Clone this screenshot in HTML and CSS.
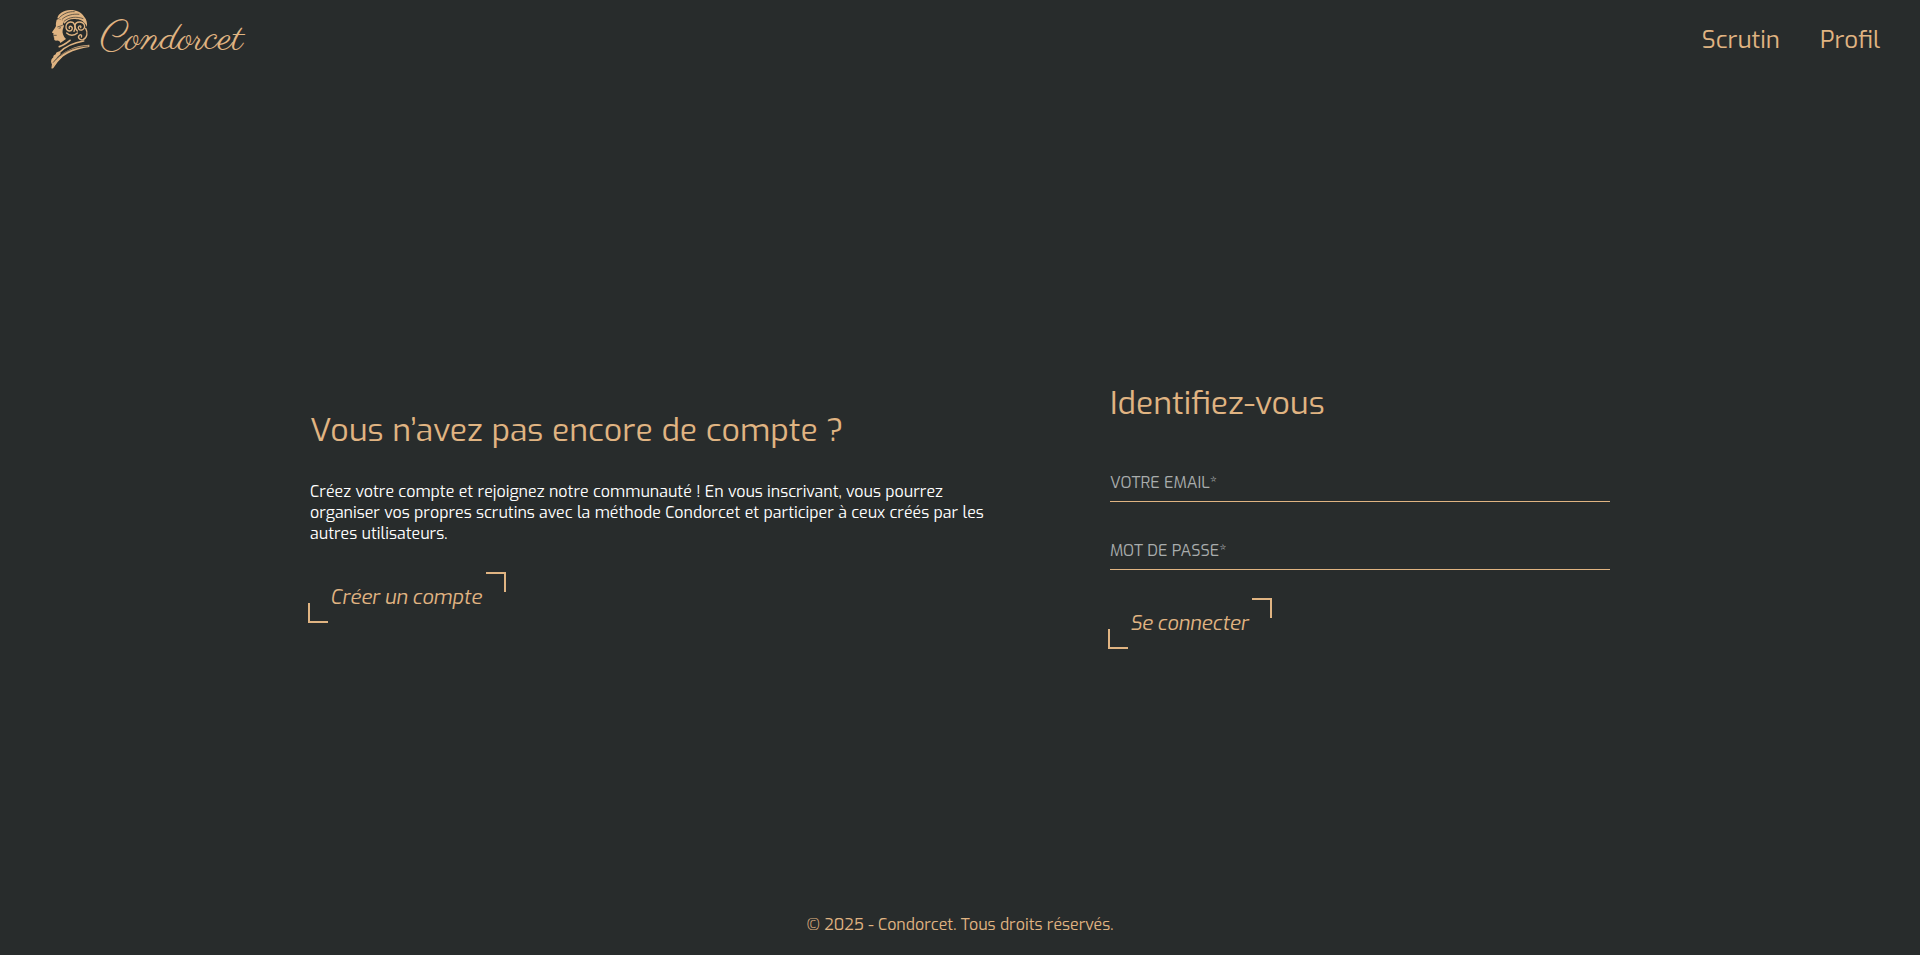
FILE: index.html
```html
<!DOCTYPE html>
<html lang="fr">
<head>
<meta charset="utf-8">
<meta name="viewport" content="width=device-width, initial-scale=1">
<title>Condorcet - Connexion</title>
<link rel="stylesheet" href="styles.css">
</head>
<body>
<header class="header">
  <a class="logo" href="#" aria-label="Condorcet">
    <svg class="logo-bust" viewBox="0 3 150 204" aria-hidden="true">
      <g class="bust-fill">
        <path d="M38 44 C36 52 35 58 36 63 C32 71 27 77 24 82 C24 85 28 84 29 86 C27 89 28 91 30 92 C28 95 29 97 31 98 C29 103 32 107 37 107 C43 106 47 108 49 114 L66 102 C58 94 54 84 56 75 L60 62 L56 58 L60 50 L52 44 L44 42Z"/>
        <path d="M40 40 C42 26 60 15 78 15 C94 14 114 22 121 36 C128 44 130 54 129 66 C122 50 110 43 98 43 C82 40 68 46 61 57 C62 50 50 42 40 40Z"/>
        <path d="M22 165 C24 158 29 160 28 154 C30 148 36 151 36 145 C40 138 45 142 47 138 L50 147 C38 157 30 168 25 179 C22 176 20 170 22 165Z"/>
        <path d="M136 119 C96 120 52 138 24 176 L22 192 C45 152 90 132 136 126Z"/>
      </g>
      <g class="bust-line">
        <path d="M100 78 C89 67 91 51 106 51 C123 51 127 69 114 75 C105 77 100 69 105 64 C109 61 112 64 110 68"/>
        <path d="M90 79 C97 66 92 50 79 51 C63 53 62 74 75 78 C85 79 88 68 81 64 C77 63 74 66 76 70"/>
        <path d="M125 70 C132 82 130 99 117 104 C106 107 99 96 107 90 C111 88 115 92 112 96"/>
        <path d="M68 84 C76 93 91 93 100 84"/>
      </g>
      <g class="bust-band">
        <path d="M46 125 C60 121 68 114 78 106 M48 141 C67 122 90 113 119 108"/>
        <path d="M53 155 C43 164 34 175 26 188"/>
      </g>
      <path class="bust-cut" d="M46 38 C58 26 74 19 92 20 M54 43 C68 30 88 26 106 28 M60 49 C76 35 98 34 118 41 M40 66 L56 61 M44 70 L51 68 M30 91 L38 91 M27 173 C52 143 86 126 133 123"/>
    </svg>
    <span class="logo-name">Condorcet</span>
  </a>
  <nav class="nav">
    <a href="#">Scrutin</a>
    <a href="#">Profil</a>
  </nav>
</header>
<main class="main">
  <div class="columns">
    <section class="signup">
      <h2 class="title">Vous n’avez pas encore de compte ?</h2>
      <p class="intro">Créez votre compte et rejoignez notre communauté ! En vous inscrivant, vous pourrez organiser vos propres scrutins avec la méthode Condorcet et participer à ceux créés par les autres utilisateurs.</p>
      <a class="action" href="#">Créer un compte</a>
    </section>
    <section class="login">
      <h2 class="title title-form">Identifiez-vous</h2>
      <form class="form">
        <input class="field" type="email" aria-label="Votre email" placeholder="VOTRE EMAIL*" required>
        <input class="field" type="password" aria-label="Mot de passe" placeholder="MOT DE PASSE*" required>
        <button class="action" type="submit">Se connecter</button>
      </form>
    </section>
  </div>
</main>
<footer class="footer">© 2025 - Condorcet. Tous droits réservés.</footer>
</body>
</html>
```
FILE: styles.css
```css
:root {
  --bg: #282c2c;
  --gold: #e0b482;
  --light: #ffffff;
  --muted: #a9adad;
  --sans: Exo, "Exo 2", Roboto, sans-serif;
}

*, *::before, *::after { box-sizing: border-box; }

body {
  margin: 0;
  min-height: 100vh;
  display: flex;
  flex-direction: column;
  background: var(--bg);
  color: var(--gold);
  font: 16px/21px var(--sans);
}

a { color: inherit; text-decoration: none; }

.header {
  display: flex;
  align-items: center;
  justify-content: space-between;
  height: 80px;
  padding: 0 40px 0 44px;
}

.logo { display: flex; align-items: center; gap: 6px; }
.logo-bust { width: 50px; height: 68px; }
.bust-fill { fill: var(--gold); }
.bust-line, .bust-band { fill: none; stroke: var(--gold); stroke-width: 4; stroke-linecap: round; }
.bust-band { stroke-width: 5; }
.bust-cut { fill: none; stroke: var(--bg); stroke-width: 2; }
.logo-name { font: 40px/48px Parisienne, "Alex Brush", "Great Vibes", "Dancing Script", "Liberation Serif", serif; }

.nav { display: flex; gap: 40px; font-size: 24px; line-height: 32px; }

.main {
  flex: 1;
  display: flex;
  align-items: center;
  justify-content: center;
  padding: 58px 40px 0;
}

.columns {
  flex: 0 1 1300px;
  display: grid;
  grid-template-columns: 7fr 5fr;
  gap: 100px;
  align-items: center;
}

.title { margin: 0 0 30px; font-size: 32px; line-height: 42px; font-weight: 400; }
.title-form { margin-bottom: 38px; }
.intro { margin: 0 0 28px; color: var(--light); }

.form { display: flex; flex-direction: column; align-items: flex-start; gap: 28px; padding-bottom: 2px; }

.field {
  width: 100%;
  height: 40px;
  padding: 2px 0 0;
  border: 0;
  border-bottom: 1px solid var(--gold);
  border-radius: 0;
  outline: 0;
  background: none;
  color: var(--light);
  font: inherit;
}
.field::placeholder { color: var(--muted); opacity: 1; }

.action {
  position: relative;
  display: inline-block;
  margin-left: -2px;
  padding: 12px 24px 12px 22px;
  border: 0;
  background: none;
  color: var(--gold);
  font: italic 20px/27px var(--sans);
  cursor: pointer;
}
.action::before, .action::after {
  content: "";
  position: absolute;
  width: 20px;
  height: 20px;
  border: solid var(--gold);
}
.action::before { top: 0; right: 0; border-width: 2px 2px 0 0; }
.action::after { bottom: 0; left: 0; border-width: 0 0 2px 2px; }

.footer { height: 61px; padding: 20px; text-align: center; }
```
